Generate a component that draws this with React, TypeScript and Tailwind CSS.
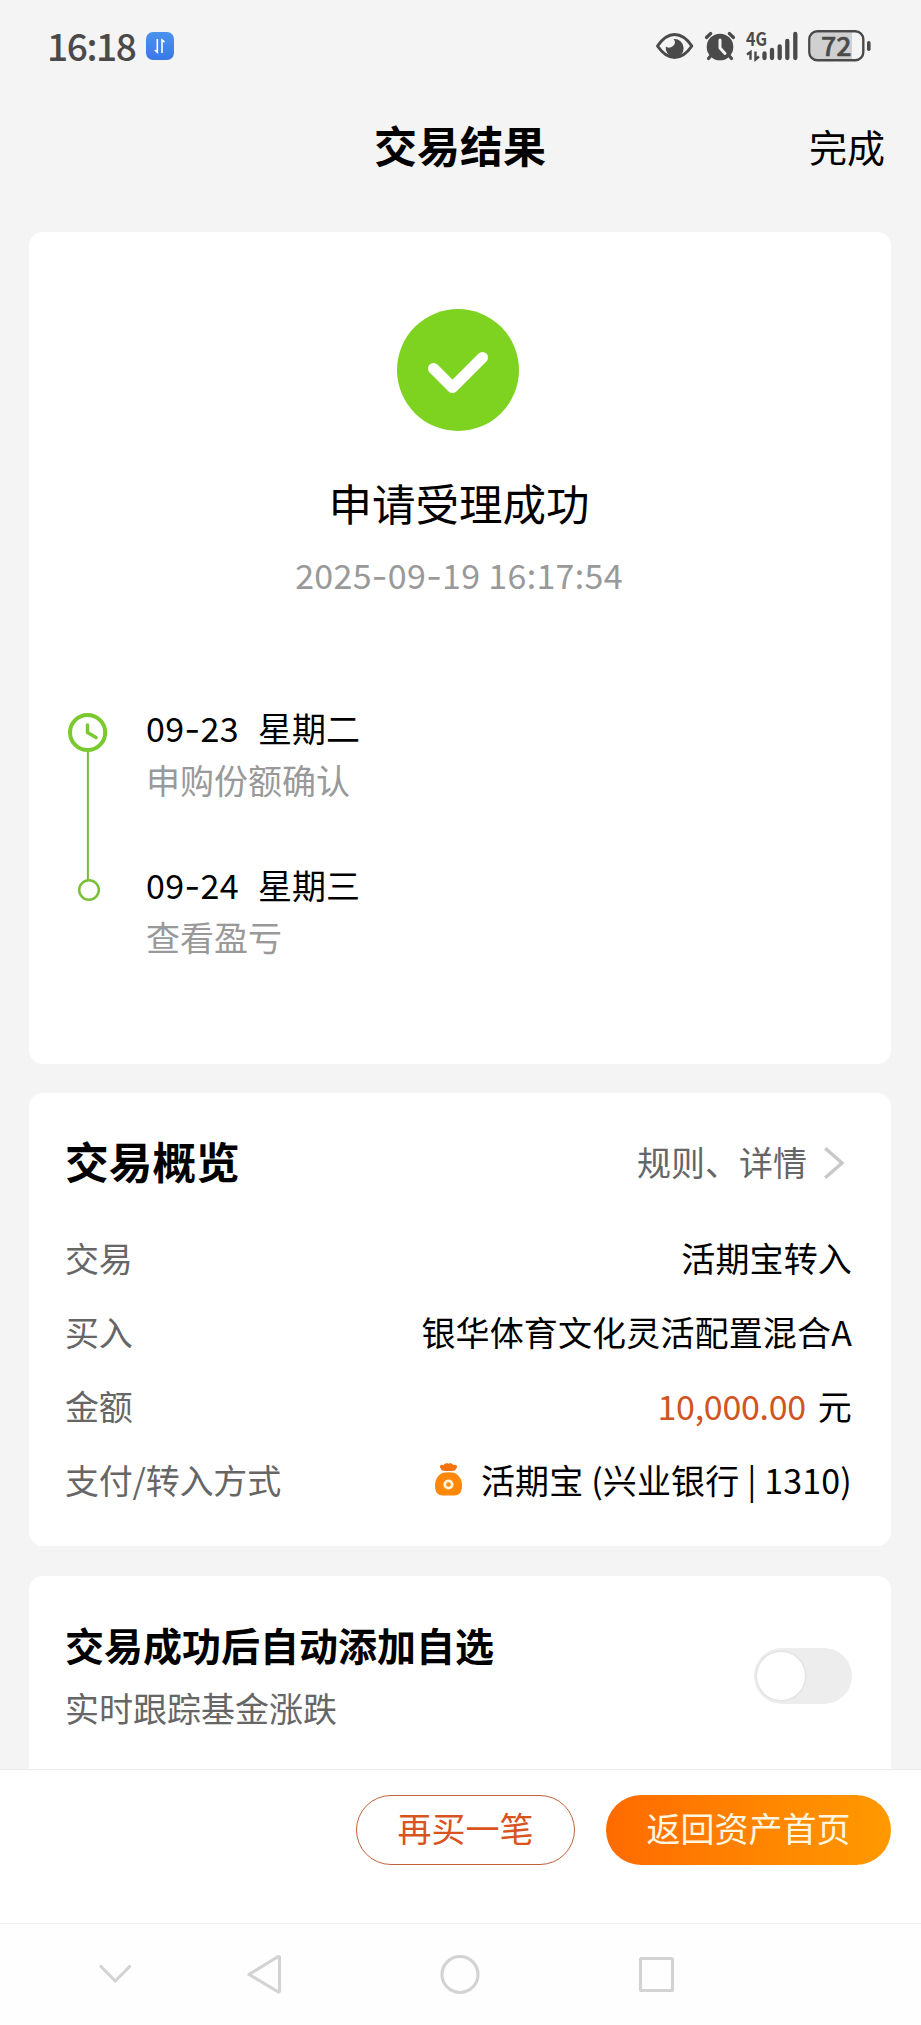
import type { ReactNode } from "react";
import { cva } from "class-variance-authority";

const card = cva("ml-[29px] mr-[30px] bg-white");

const StatusBar = () => {
  return (
    <div className="flex h-[92px] shrink-0 items-center justify-between pl-[47px] pr-[50px] text-[#4a4a4a]">
      <div className="flex items-center gap-x-[11px]">
        <span className="-mt-[3px] w-[88px] text-[37px] font-medium leading-[40px] tracking-[-1.4px]">
          16:18
        </span>
        <svg width="28" height="28" viewBox="0 0 28 28" fill="none">
          <defs>
            <linearGradient id="app" x1="0" y1="0" x2="0" y2="1">
              <stop stopColor="#4b93ee" />
              <stop offset="1" stopColor="#3b78e7" />
            </linearGradient>
          </defs>
          <rect width="28" height="28" rx="7" fill="url(#app)" />
          <path
            d="M11.3 7v13.2L8.8 18M16 21V8l2.6 2.2"
            stroke="#fff"
            strokeWidth="1.6"
          />
        </svg>
      </div>
      <svg width="216" height="74" viewBox="655 9 216 74" fill="none">
        <path
          d="M657.500 46C663 38 668.500 34.500 674.500 34.500S686.500 38 691.800 46C686.500 54 680.500 57.500 674.500 57.500S663 54 657.500 46Z"
          stroke="currentColor"
          strokeWidth="3"
          strokeLinejoin="round"
        />
        <path
          d="M673.500 39.200A9 9 0 1 1 665.800 46.500Q667.500 48 670 47.500Q674.500 46 675 42.500Q675 40.500 673.500 39.200Z"
          fill="currentColor"
        />
        <circle cx="720" cy="47" r="13.300" fill="currentColor" />
        <path
          d="M706.500 37.500l4.200-4M733.500 37.500l-4.200-4M708.500 58.500l3-3.500M731.500 58.500l-3-3.500"
          stroke="currentColor"
          strokeWidth="3.200"
          strokeLinecap="round"
        />
        <path
          d="M720 40v8l5 5.500"
          stroke="#f4f4f4"
          strokeWidth="3"
          strokeLinecap="round"
          strokeLinejoin="round"
        />
        <text
          x="746"
          y="46"
          fontSize="18.500"
          fontWeight="700"
          fill="currentColor"
          textLength="21"
          lengthAdjust="spacingAndGlyphs"
        >
          4G
        </text>
        <path
          d="M747 54.500l3.500-2.500V59.800M755.500 51.500V59.500l3.500-3"
          stroke="currentColor"
          strokeWidth="2.400"
        />
        <path
          d="M764.500 53.500v4.500M772 50v8M779.700 46.500v11.500M787.300 41v17M795.300 34v24"
          stroke="currentColor"
          strokeWidth="4.300"
          strokeLinecap="round"
        />
        <path d="M817 32.500H852V59.500H817a6 6 0 0 1-6-6v-15a6 6 0 0 1 6-6Z" fill="#d0d0d0" />
        <rect
          x="809.300"
          y="31.200"
          width="54"
          height="29"
          rx="8"
          stroke="currentColor"
          strokeWidth="2.400"
        />
        <rect x="867" y="41" width="3.600" height="10" rx="1.800" fill="currentColor" />
        <text
          x="821"
          y="55.500"
          fontSize="26.500"
          fontWeight="500"
          fill="currentColor"
          stroke="currentColor"
          strokeWidth="0.500"
          textLength="30.500"
          lengthAdjust="spacingAndGlyphs"
        >
          72
        </text>
      </svg>
    </div>
  );
};

// wide dash, the CJK face has a much shorter one
const Dash = () => <span className="font-['Inter']">-</span>;

interface StepProps {
  day: string;
  weekday: string;
  label: string;
}

const Step = ({ day, weekday, label }: StepProps) => {
  return (
    <div className="flex h-[157px] flex-col">
      <p className="flex text-[34px] leading-[52px] text-black">
        <span className="w-[112px] tracking-[0.4px]">
          09
          <Dash />
          {day}
        </span>
        {weekday}
      </p>
      <p className="-mt-[2px] text-[34px] leading-[52px] text-[#999]">{label}</p>
    </div>
  );
};

interface RowProps {
  label: string;
  children: ReactNode;
}

const Row = ({ label, children }: RowProps) => {
  return (
    <div className="flex h-[74px] items-center justify-between text-[34px]">
      <span className="tracking-[-0.2px] text-[#666]">{label}</span>
      <div className="flex items-center tracking-[0.15px] text-black">{children}</div>
    </div>
  );
};

const MoneyBag = () => {
  return (
    <svg
      width="27"
      height="33"
      viewBox="0 0 27 33"
      className="mr-[19px]"
      fill="none"
    >
      <path
        d="M7 7.500 5.200 4.800C3.900 2.500 6.500 1 8.600 2 10 .2 12 0 13.500 .8 15 0 17 .2 18.400 2 20.500 1 23.100 2.500 21.800 4.800L20 7.500Q13.500 8.600 7 7.500Z"
        fill="#f9730c"
      />
      <path
        d="M7 10Q13.500 8.300 20 10C25 13 27 17.500 27 22.500 27 29 24.500 32.500 19.500 32.500H7.500C2.500 32.500 0 29 0 22.500 0 17.500 2 13 7 10Z"
        fill="#ff8808"
      />
      <circle cx="13.500" cy="21.500" r="3.700" stroke="#fff6dc" strokeWidth="2.800" />
    </svg>
  );
};

export default function App() {
  return (
    <div className="flex h-[2025px] w-[921px] flex-col overflow-hidden bg-[#f4f4f4] font-['Noto_Sans_CJK_SC',sans-serif]">
      <StatusBar />

      <header className="grid h-[140px] shrink-0 grid-cols-3 px-[36px]">
        <span />
        <h1 className="-ml-[1px] mt-[22px] text-center text-[43px] font-bold leading-[60px] text-black">
          交易结果
        </h1>
        <button className="mt-[24px] h-[60px] text-right text-[38px] leading-[60px] text-black">
          完成
        </button>
      </header>

      <section className={card({ className: "h-[832px] shrink-0 rounded-[14px]" })}>
        <div className="flex flex-col items-center pr-[2px] pt-[77px]">
          <svg width="122" height="122" viewBox="0 0 122 122" fill="none" className="mr-[2px]">
            <circle cx="61" cy="61" r="61" fill="#7ed321" />
            <path
              d="M36.500 59.500l19 19 30-30"
              stroke="#fff"
              strokeWidth="11"
              strokeLinecap="round"
              strokeLinejoin="round"
            />
          </svg>
          <h2 className="mt-[42px] text-[43.500px] leading-[60px] text-black">
            申请受理成功
          </h2>
          <p className="mt-[16px] text-[34px] leading-[52px] tracking-[0.3px] text-[#999]">
            2025
            <Dash />
            09
            <Dash />
            19 16:17:54
          </p>
        </div>

        <div className="mt-[99px] flex">
          <svg width="117" height="210" viewBox="29 702 117 210" fill="none">
            <path d="M87.900 751V880" stroke="#78b944" strokeWidth="2" />
            <circle cx="87.600" cy="732.500" r="17.600" stroke="#7ac92f" strokeWidth="4" />
            <path
              d="M87.500 725v7.500l8.500 5"
              stroke="#7ac92f"
              strokeWidth="3.500"
              strokeLinecap="round"
              strokeLinejoin="round"
            />
            <circle cx="89" cy="890" r="9.800" fill="#fff" stroke="#7ac03a" strokeWidth="2.500" />
          </svg>
          <div>
            <Step day="23" weekday="星期二" label="申购份额确认" />
            <Step day="24" weekday="星期三" label="查看盈亏" />
          </div>
        </div>
      </section>

      <section className={card({ className: "mt-[29px] h-[453px] shrink-0 rounded-[14px] pl-[36px] pr-[39px] pt-[28px]" })}>
        <div className="mb-[19px] flex h-[80px] items-center justify-between">
          <h2 className="text-[43.700px] font-bold text-black">交易概览</h2>
          <div className="flex items-center pr-[8px] text-[34px] text-[#666]">
            规则、详情
            <svg width="20" height="32" viewBox="0 0 20 32" fill="none" className="ml-[17px] mt-[3px]">
              <path d="M1.200 1.200 18 16 1.200 30.800" stroke="#c8c8c8" strokeWidth="3.400" />
            </svg>
          </div>
        </div>
        <Row label="交易">活期宝转入</Row>
        <Row label="买入">银华体育文化灵活配置混合A</Row>
        <Row label="金额">
          <span className="mr-[12px] tracking-[-0.3px] text-[#cf5523]">10,000.00</span>元
        </Row>
        <Row label="支付/转入方式">
          <MoneyBag />
          活期宝 (兴业银行 | 1310)
        </Row>
      </section>

      <section className={card({ className: "mt-[30px] flex h-[193px] shrink-0 justify-between rounded-t-[14px] pl-[36px] pr-[39px]" })}>
        <div className="pt-[38px]">
          <h3 className="text-[39px] font-bold leading-[60px] text-black">
            交易成功后自动添加自选
          </h3>
          <p className="mt-[8px] text-[34px] leading-[52px] text-[#666]">
            实时跟踪基金涨跌
          </p>
        </div>
        <button
          role="switch"
          aria-checked="false"
          className="mt-[72px] flex h-[56px] w-[98px] items-center rounded-full bg-[#ededed] pl-[3px]"
        >
          <span className="size-[48px] rounded-full bg-white shadow-[0_0_2px_1px_#dedede]" />
        </button>
      </section>

      <footer className="flex h-[154px] shrink-0 justify-end gap-x-[31px] border-t border-[#ebebeb] bg-white pr-[30px] pt-[25px]">
        <button className="h-[70px] w-[219px] rounded-full border border-[#c0603a] pb-[4px] text-[34px] leading-[60px] text-[#d9531e]">
          再买一笔
        </button>
        <button className="h-[70px] w-[285px] rounded-full bg-linear-to-r from-[#ff6a00] to-[#ff9900] pb-[4px] text-[34px] leading-[60px] text-[#fff6e0]">
          返回资产首页
        </button>
      </footer>

      <nav className="border-t border-[#f0f0f0] bg-[#fefefe] pt-[28px] pb-[29px]">
        <svg width="921" height="44" viewBox="0 1952 921 44" fill="none" stroke="#d3d3d3" strokeWidth="3.200" strokeLinecap="round" strokeLinejoin="round">
          <path d="M101 1966.500l14.300 14.500 14.300-14.500" />
          <path d="M249 1974.500 277.500 1957q2-1 2 1v32.500q0 2-2 1Z" />
          <circle cx="460" cy="1974.500" r="18" />
          <rect x="640.500" y="1958.500" width="32" height="32" rx="1" />
        </svg>
      </nav>
    </div>
  );
}
